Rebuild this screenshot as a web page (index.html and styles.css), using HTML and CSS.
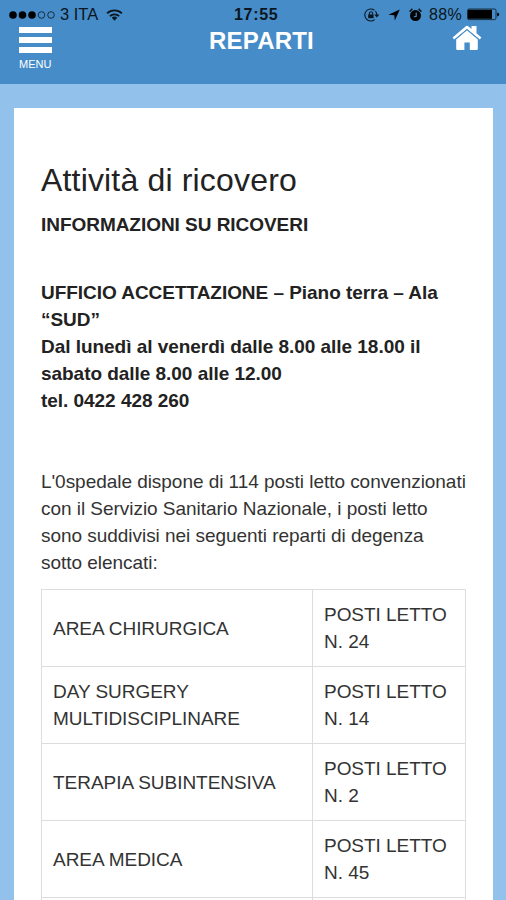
FILE: index.html
```html
<!DOCTYPE html>
<html lang="it">
<head>
    <meta charset="UTF-8">
    <meta name="viewport" content="width=device-width, initial-scale=1.0">
    <title>Reparti</title>
    <link rel="stylesheet" href="styles.css">
</head>
<body>
    <div class="screen">
        <header class="header">
            <div class="status-bar">
                <div class="status-left">
                    <svg class="signal" width="46" height="10" viewBox="0 0 46 10">
                        <circle cx="4" cy="5" r="3.8"/>
                        <circle cx="13.5" cy="5" r="3.8"/>
                        <circle cx="23" cy="5" r="3.8"/>
                        <circle class="off" cx="32.5" cy="5" r="3.3"/>
                        <circle class="off" cx="42" cy="5" r="3.3"/>
                    </svg>
                    <span class="carrier">3 ITA</span>
                    <svg class="wifi" width="17" height="12" viewBox="0 0 18 13">
                        <path d="M1 4.8a11.5 11.5 0 0 1 16 0M4 7.8a7.2 7.2 0 0 1 10 0"/>
                        <path class="dot" d="M6 9.6a4.4 4.4 0 0 1 6 0L9 12.8z"/>
                    </svg>
                </div>
                <div class="clock">17:55</div>
                <div class="status-right">
                    <svg class="rotation" width="17" height="14" viewBox="0 0 17 14">
                        <path d="M11.4 2.2A6 6 0 1 0 11.6 11.6M12.4 3.2a6 6 0 0 1 1.4 3.8"/>
                        <path class="fill" d="M11.2 6.4h5.2l-2.6 3z"/>
                        <path d="M6.4 6.6V5.4a1.6 1.6 0 0 1 3.2 0v1.2"/>
                        <rect class="fill" x="5.2" y="6.4" width="5.4" height="3.8"/>
                    </svg>
                    <svg class="location" width="12" height="12" viewBox="0 0 12 12">
                        <path d="M11.8.6 6.8 11.4 6.3 6.2.4 5.8z"/>
                    </svg>
                    <svg class="alarm" width="13" height="14" viewBox="0 0 13 14">
                        <circle cx="6.5" cy="7.6" r="5.5"/>
                        <path d="M.6 3.6 3.4.9M12.4 3.6 9.6.9"/>
                        <path class="hands" d="M7.2 4.4v3.8L4.8 9"/>
                    </svg>
                    <span class="percent">88%</span>
                    <svg class="battery" width="33" height="13" viewBox="0 0 33 13">
                        <rect class="case" x=".5" y="1" width="28.5" height="10.6" rx="1.5"/>
                        <rect x="1" y="1.8" width="24" height="9"/>
                        <path d="M30.2 4.4q2 .3 2 2t-2 2z"/>
                    </svg>
                </div>
            </div>
            <nav class="navbar">
                <a class="menu">
                    <span class="bar"></span>
                    <span class="bar"></span>
                    <span class="bar"></span>
                    <span class="menu-label">MENU</span>
                </a>
                <div class="title">REPARTI</div>
                <a class="home">
                    <svg width="30" height="26" viewBox="0 0 30 26">
                        <path d="M4.2 14.4 15 5.2l10.8 9.2v9.4q0 1.2-1.2 1.2h-6.8v-7.4h-5.4V25H5.4q-1.2 0-1.2-1.2z"/>
                        <path d="M.6 12.6 13.5 1.4q1.5-1.2 3 0l3 2.6V.9h5v7.4l4.9 4.3-1.6 2L15 3.9 2.2 14.6z"/>
                        <path class="eave" d="M2.6 14.9 15 4.5l12.4 10.4"/>
                    </svg>
                </a>
            </nav>
        </header>

        <main class="card">
            <h1>Attività di ricovero</h1>
            <p class="info"><strong>INFORMAZIONI SU RICOVERI</strong></p>
            <p class="office">
                <strong>UFFICIO ACCETTAZIONE – Piano terra – Ala<br>
                “SUD”<br>
                Dal lunedì al venerdì dalle 8.00 alle 18.00 il<br>
                sabato dalle 8.00 alle 12.00<br>
                tel. 0422 428 260</strong>
            </p>
            <p class="text">L'0spedale dispone di 114 posti letto convenzionati<br>
                con il Servizio Sanitario Nazionale, i posti letto<br>
                sono suddivisi nei seguenti reparti di degenza<br>
                sotto elencati:</p>
            <table>
                <tbody>
                    <tr>
                        <td>AREA CHIRURGICA</td>
                        <td>POSTI LETTO<br>N. 24</td>
                    </tr>
                    <tr>
                        <td>DAY SURGERY<br>MULTIDISCIPLINARE</td>
                        <td>POSTI LETTO<br>N. 14</td>
                    </tr>
                    <tr>
                        <td>TERAPIA SUBINTENSIVA</td>
                        <td>POSTI LETTO<br>N. 2</td>
                    </tr>
                    <tr>
                        <td>AREA MEDICA</td>
                        <td>POSTI LETTO<br>N. 45</td>
                    </tr>
                    <tr>
                        <td></td>
                        <td></td>
                    </tr>
                </tbody>
            </table>
        </main>
    </div>
</body>
</html>
```

FILE: styles.css
```css
:root {
    --header-color: #468cc8;
    --page-color: #92c2ec;
    --text-color: #222;
    --border-color: #ddd;
}

* {
    box-sizing: border-box;
}

body {
    margin: 0;
    font-family: "Liberation Sans", Arial, sans-serif;
    color: var(--text-color);
    background-color: var(--page-color);
}

.screen {
    height: 900px;
    overflow: hidden;
}

.header {
    height: 84px;
    background-color: var(--header-color);
}

/* status bar */
.status-bar {
    display: grid;
    grid-template-columns: 225px auto 1fr;
    align-items: center;
    height: 26px;
    padding: 3px 6px 0 9px;
    color: #0b1620;
    font-size: 16.5px;
    line-height: 23px;
}

.status-left,
.status-right {
    display: flex;
    align-items: center;
}

.status-right {
    justify-content: flex-end;
}

.carrier {
    margin: 0 8px 0 5px;
}

.clock {
    font-weight: bold;
    font-size: 16px;
    letter-spacing: 0.7px;
}

.signal .off {
    fill: none;
    stroke: #0b1620;
    stroke-width: 0.8;
}

.wifi path {
    fill: none;
    stroke: #0b1620;
    stroke-width: 2;
}

.wifi .dot {
    fill: #0b1620;
    stroke: none;
}

.rotation {
    margin-right: 8px;
}

.rotation path {
    fill: none;
    stroke: #0b1620;
    stroke-width: 1.1;
}

.rotation .fill {
    fill: #0b1620;
    stroke: none;
}

.location {
    margin-right: 9px;
}

.alarm path {
    fill: none;
    stroke: #0b1620;
    stroke-width: 1.5;
}

.alarm .hands {
    stroke: var(--header-color);
    stroke-width: 1.2;
}

.percent {
    margin: 0 5px 0 7px;
    font-size: 16px;
    letter-spacing: 0.3px;
}

.battery .case {
    fill: none;
    stroke: #0b1620;
    stroke-width: 0.8;
}

/* navbar */
.navbar {
    display: grid;
    grid-template-columns: 190px auto 1fr;
    align-items: start;
    padding: 0 24px 0 19px;
    color: #fff;
}

.menu {
    display: flex;
    flex-direction: column;
    gap: 4px;
    width: 33px;
    padding-top: 1px;
}

.bar {
    height: 6px;
    background-color: #fff;
}

.menu-label {
    margin-top: -1px;
    font-size: 11px;
    line-height: 16px;
}

.title {
    font-size: 24px;
    font-weight: bold;
    line-height: 29px;
    letter-spacing: 0.2px;
}

.home {
    justify-self: end;
    margin-top: -1px;
    line-height: 0;
}

.home svg {
    fill: #fff;
}

.home .eave {
    fill: none;
    stroke: var(--header-color);
    stroke-width: 0.9;
}

/* content */
.card {
    height: 900px;
    margin: 24px 13px 0 14px;
    padding: 54px 27px 0;
    background-color: #fff;
    font-size: 19px;
    line-height: 27px;
    letter-spacing: -0.04px;
    white-space: nowrap;
}

h1 {
    margin: 0 0 13px;
    font-size: 32px;
    font-weight: normal;
    line-height: 36px;
    letter-spacing: 0.17px;
}

p {
    margin: 0;
}

.info {
    margin-bottom: 41px;
}

.office {
    margin-bottom: 54px;
}

.text {
    margin-bottom: 13px;
    color: #333;
}

table {
    width: 425px;
    table-layout: fixed;
    border-collapse: collapse;
    color: #333;
}

td {
    height: 77px;
    padding: 11px;
    border: 1px solid var(--border-color);
}

td:last-child {
    width: 153px;
}
```
